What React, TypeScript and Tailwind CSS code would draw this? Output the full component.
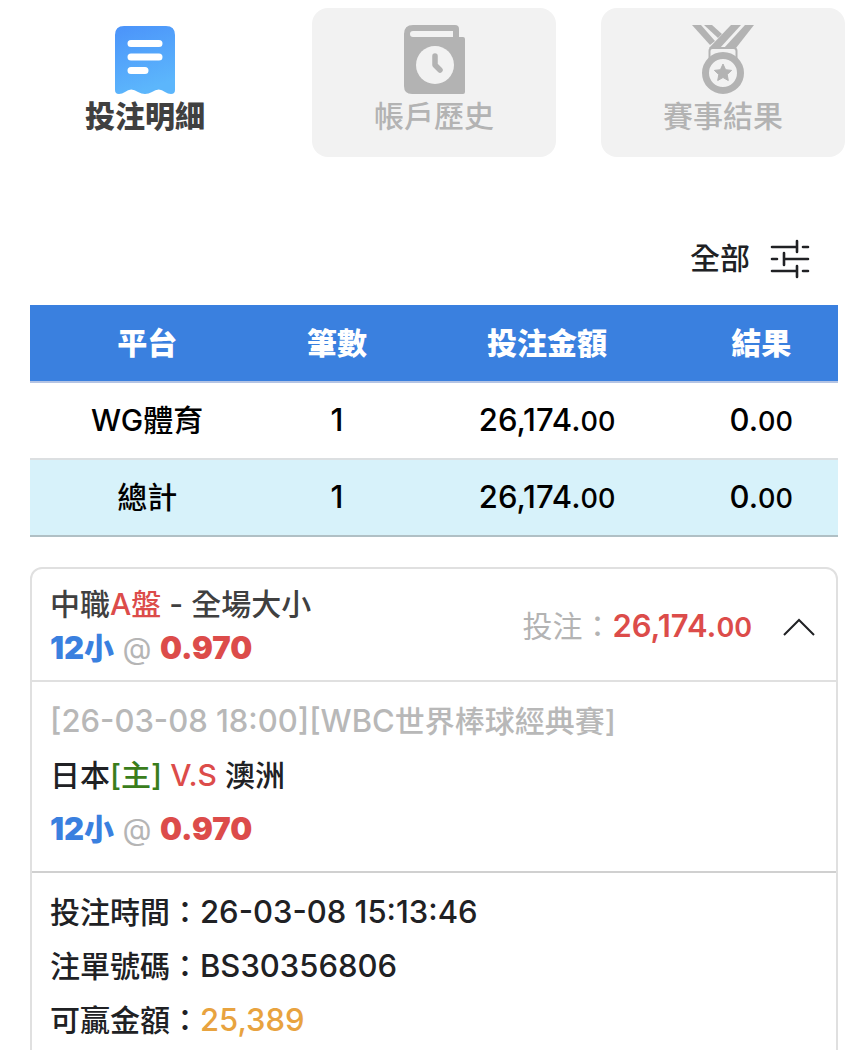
import { useState } from 'react';

const TABS = [
  { value: 'bets', label: '投注明細', Icon: ReceiptIcon },
  { value: 'history', label: '帳戶歷史', Icon: HistoryIcon },
  { value: 'results', label: '賽事結果', Icon: MedalIcon },
];

const ROWS = [
  { name: 'WG體育', count: 1, amount: '26,174.00', result: '0.00' },
  { name: '總計', count: 1, amount: '26,174.00', result: '0.00' },
];

function ReceiptIcon() {
  return (
    <svg width="62" height="70" viewBox="0 0 62 70" aria-hidden="true">
      <defs>
        <linearGradient id="receipt" x1="0" y1="0" x2="0.3" y2="1">
          <stop offset="0" stopColor="#4b93fa" />
          <stop offset="1" stopColor="#5cb6fc" />
        </linearGradient>
      </defs>
      <path
        d="M10 1H52Q61 1 61 10V65Q61 69 57 69Q54 69 51 67Q45 62 38 67Q31 71 24 67Q17 62 11 67Q8 69 5 69Q1 69 1 65V10Q1 1 10 1Z"
        fill="url(#receipt)"
      />
      <path d="M17 18.5H45M17 32H45M17 45.5H31" stroke="#fff" strokeWidth="7" strokeLinecap="round" />
    </svg>
  );
}

function HistoryIcon() {
  return (
    <svg width="62" height="70" viewBox="-1 0 62 70" aria-hidden="true">
      <path
        d="M9 0H51Q55 0 55 4V12H59Q61 12 61 14V67Q61 69 59 69H8Q0 69 0 61V9Q0 0 9 0ZM9 6Q6 6 6 9Q6 12 9 12H49V6Z"
        fill="#b3b3b3"
        fillRule="evenodd"
      />
      <circle cx="31" cy="40" r="19" fill="#f2f2f2" />
      <path d="M31 31V40L36 45" fill="none" stroke="#b3b3b3" strokeWidth="5.5" strokeLinecap="round" strokeLinejoin="round" />
    </svg>
  );
}

function MedalIcon() {
  return (
    <svg width="62" height="70" viewBox="0 0 62 70" aria-hidden="true">
      <g fill="#b3b3b3">
        <path d="M0 0H9L23 16L18 20Z" />
        <path d="M12 0H20L30 9L26 13Z" />
        <path d="M39 0H49L28 23H17Z" />
        <path d="M53 0H62L44 23H32Z" />
      </g>
      <rect x="17.5" y="23" width="27" height="14" rx="3" fill="#f2f2f2" stroke="#b3b3b3" strokeWidth="2" />
      <circle cx="31" cy="48" r="17.5" fill="#f2f2f2" stroke="#b3b3b3" strokeWidth="7" />
      <path
        d="M31 39L33.6 44.7L39.6 45.4L35.2 49.5L36.3 55.5L31 52.5L25.7 55.5L26.8 49.5L22.4 45.4L28.4 44.7Z"
        fill="#b3b3b3"
        stroke="#b3b3b3"
        strokeLinejoin="round"
      />
    </svg>
  );
}

function FilterIcon() {
  return (
    <svg width="40" height="40" viewBox="0 0 40 40" fill="none" stroke="currentColor" strokeWidth="2.6" strokeLinecap="round" aria-hidden="true">
      <path d="M2 8H27M27 2V13M33 8H38M2 20H7M14 14V26M14 20H38M2 32H27M27 27V38M33 32H38" />
    </svg>
  );
}

// cents are drawn smaller than the whole part
function Money({ value }: { value: string }) {
  const [whole, cents] = value.split('.');
  return (
    <span className="text-[31px]">
      {whole}.<span className="text-[27px]">{cents}</span>
    </span>
  );
}

function Odds() {
  return (
    <>
      <span className="font-black text-[#3a80df]">
        <span className="text-[31px]">12</span>小
      </span>
      <span className="text-[#b5b5b5]"> @ </span>
      <span className="text-[31px] font-black text-[#dc4c4a]">0.970</span>
    </>
  );
}

export default function App() {
  const [tab, setTab] = useState('bets');
  const [open, setOpen] = useState(true);

  return (
    <main className="min-h-screen bg-white pt-2 font-['Inter','Noto_Sans_CJK_TC',sans-serif] text-[30px] text-[#202124]">
      <nav className="grid grid-cols-3 gap-[45px] px-[23px]">
        {TABS.map(({ value, label, Icon }) => (
          <button
            key={value}
            onClick={() => setTab(value)}
            className={`flex flex-col items-center rounded-2xl pt-[17px] pb-[19px] leading-[43px] ${
              tab === value ? 'font-black text-[#404040]' : 'bg-[#f2f2f2] font-medium text-[#b3b3b3]'
            }`}
          >
            <Icon />
            {label}
          </button>
        ))}
      </nav>

      <div className="mt-20 flex justify-end px-[58px]">
        <button className="flex items-center gap-5 leading-[43px] font-medium">
          全部
          <FilterIcon />
        </button>
      </div>

      <div className="px-[30px] pt-[25px]">
        <table className="w-full table-fixed text-center text-black">
          <thead>
            <tr className="h-[77px] border-b-2 border-[#b4c4e4] bg-[#3a80df] text-white">
              <th className="w-[29%] font-black">平台</th>
              <th className="w-[18%] font-black">筆數</th>
              <th className="w-[34%] font-black">投注金額</th>
              <th className="w-[19%] font-black">結果</th>
            </tr>
          </thead>
          <tbody className="font-medium">
            {ROWS.map((r) => (
              <tr key={r.name} className="h-[77px] border-b-2 border-[#dcdfe1] last:border-[#b0c0c5] last:bg-[#d7f2fa]">
                <td>{r.name}</td>
                <td className="text-[31px]">{r.count}</td>
                <td><Money value={r.amount} /></td>
                <td><Money value={r.result} /></td>
              </tr>
            ))}
          </tbody>
        </table>

        <section className="mt-[30px] rounded-xl border-2 border-[#e0e0e0]">
          <div className="flex items-center justify-between px-[18px] pt-[14px] pb-[10px] leading-[43px]">
            <div>
              <p className="font-medium text-[#404040]">
                中職<span className="text-[#dc4c4a]">A盤</span> - 全場大小
              </p>
              <p><Odds /></p>
            </div>
            <div className="flex items-center">
              <span className="text-[#b3b3b3]">投注：</span>
              <span className="font-semibold text-[#dc4c4a]"><Money value="26,174.00" /></span>
              <button onClick={() => setOpen(!open)} aria-label="展開或收合" className="ml-[30px]">
                <svg width="36" height="20" viewBox="0 0 36 20" fill="none" stroke="#202124" strokeWidth="2" className={open ? '' : 'rotate-180'}>
                  <path d="M2 18L17 3L32 18" />
                </svg>
              </button>
            </div>
          </div>

          {open && (
            <>
              <div className="border-t-2 border-[#e0e0e0] px-[18px] pt-3 pb-[15px] leading-[54px]">
                <p className="font-medium text-[#b8b8b8]">
                  <span className="text-[31px]">[26-03-08 18:00][WBC</span>世界棒球經典賽]
                </p>
                <p className="font-medium">
                  日本<span className="text-[#3a7d1c]">[主]</span> <span className="text-[#dc4c4a]">V.S</span> 澳洲
                </p>
                <p><Odds /></p>
              </div>
              <div className="border-t-2 border-[#d0d0d0] px-[18px] pt-3 pb-10 leading-[54px] font-medium">
                <p>投注時間：<span className="text-[31px]">26-03-08 15:13:46</span></p>
                <p>注單號碼：<span className="text-[31px]">BS30356806</span></p>
                <p>可贏金額：<span className="text-[31px] text-[#e8a33f]">25,389</span></p>
              </div>
            </>
          )}
        </section>
      </div>
    </main>
  );
}
